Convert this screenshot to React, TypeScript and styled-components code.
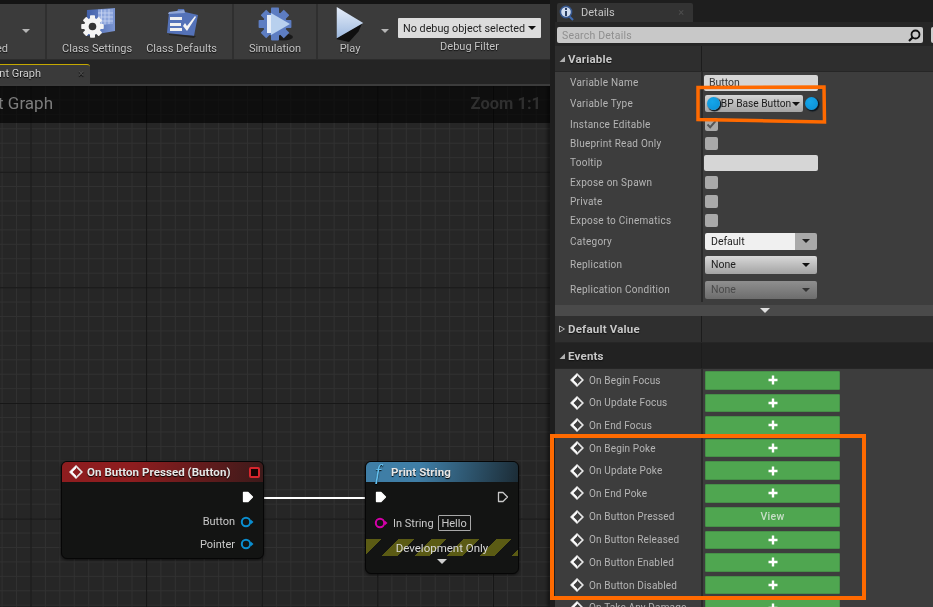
import styled, { createGlobalStyle } from "styled-components";

const Global = createGlobalStyle`
  html, body {
    margin: 0;
    padding: 0;
    width: 933px;
    height: 607px;
    overflow: hidden;
    background: #1a1a1a;
  }
  * { box-sizing: border-box; }
`;

const Screen = styled.div`
  position: relative;
  width: 933px;
  height: 607px;
  display: flex;
  overflow: hidden;
  background: #1c1c1c;
  font-family: Roboto, "Liberation Sans", sans-serif;
  filter: blur(0.35px);
`;

const LeftColumn = styled.div`
  width: 550px;
  height: 607px;
  display: flex;
  flex-direction: column;
  border-top: 4px solid #141414;
  background: #242424;
`;

const Toolbar = styled.div`
  height: 56px;
  flex: none;
  display: flex;
  background: #3b3b3b;
  border-bottom: 1px solid #2c2c2c;
`;

const ClippedGroup = styled.div`
  width: 47px;
  flex: none;
  display: flex;
  justify-content: space-between;
  overflow: hidden;
  border-right: 2px solid #2f2f2f;
`;

const ClippedLabelBox = styled.div`
  width: 8px;
  display: flex;
  justify-content: flex-end;
  white-space: nowrap;
  padding-top: 38px;
`;

const Caret = styled.span<{ $w?: number; $color?: string }>`
  width: 0;
  height: 0;
  flex: none;
  border-left: ${(p) => p.$w ?? 4}px solid transparent;
  border-right: ${(p) => p.$w ?? 4}px solid transparent;
  border-top: ${(p) => p.$w ?? 4}px solid ${(p) => p.$color ?? "#b5b5b5"};
`;

const ToolGroup = styled.div<{ $w: number; $line?: boolean }>`
  width: ${(p) => p.$w}px;
  flex: none;
  display: flex;
  justify-content: center;
  gap: 14px;
  border-right: ${(p) => (p.$line ? "2px solid #2f2f2f" : "none")};
`;

const ToolButton = styled.div`
  display: flex;
  flex-direction: column;
  align-items: center;
  justify-content: space-between;
  padding: 2px 0 4px;
  height: 55px;
`;

const ToolLabel = styled.span`
  font-size: 11px;
  line-height: 13px;
  color: #c4c4c4;
  white-space: nowrap;
  text-shadow: 0 1px 1px #111;
`;

const DebugBox = styled.div`
  flex: 1;
  display: flex;
  flex-direction: column;
  align-items: center;
  padding: 14px 9px 0 6px;
  gap: 2px;
`;

const DebugSelect = styled.div`
  width: 143px;
  height: 20px;
  flex: none;
  display: flex;
  align-items: center;
  justify-content: space-between;
  padding: 0 5px;
  background: #dcdcdc;
  border-radius: 1px;
  font-size: 10.8px;
  color: #222;
  white-space: nowrap;
`;

const CaretSlot = styled.div<{ $right?: number; $left?: number }>`
  width: 14px;
  flex: none;
  display: flex;
  justify-content: center;
  align-items: flex-start;
  padding-top: 25px;
  margin-left: ${(p) => p.$left ?? 0}px;
  margin-right: ${(p) => p.$right ?? 0}px;
`;

const TabStrip = styled.div`
  height: 24px;
  flex: none;
  display: flex;
  background: #242424;
`;

const GraphTab = styled.div`
  width: 90px;
  height: 20px;
  margin-top: 4px;
  padding: 0 6px 2px 0;
  display: flex;
  align-items: center;
  overflow: hidden;
  background: #3a3a3a;
  border-top: 1px solid #c4a800;
  border-top-right-radius: 3px;
  font-size: 11px;
  color: #d0d0d0;
  text-shadow: 0 1px 1px #000;
`;

const ClipEnd = styled.div<{ $w: number }>`
  width: ${(p) => p.$w}px;
  flex: none;
  display: flex;
  justify-content: flex-end;
  white-space: nowrap;
`;

const TabClose = styled.span`
  margin-left: auto;
  color: #4f4f4f;
  font-size: 11px;
`;

const Graph = styled.div`
  position: relative;
  flex: 1;
  overflow: hidden;
  border-top: 2px solid #3c3c3c;
  background-color: #262626;
  background-image:
    linear-gradient(to right, #141414 1px, transparent 1px),
    linear-gradient(to bottom, #141414 1px, transparent 1px),
    linear-gradient(to right, #313131 1px, transparent 1px),
    linear-gradient(to bottom, #313131 1px, transparent 1px);
  background-size: 115.6px 115.6px, 115.6px 115.6px, 14.45px 14.45px, 14.45px 14.45px;
  background-position: 30.5px 85.7px, 30.5px 85.7px, 1.6px 13.45px, 1.6px 13.45px;
  box-shadow: inset -3px 0 3px rgba(0, 0, 0, 0.4);
`;

const GraphTitle = styled.div`
  height: 37px;
  display: flex;
  align-items: center;
  justify-content: space-between;
  padding: 0 9px 3px 0;
  background: rgba(0, 0, 0, 0.62);
  font-size: 17px;
  color: #7d7d7d;
`;

const ZoomText = styled.span`
  font-size: 16.5px;
  font-weight: 700;
  color: #2f2f2f;
`;

const NodeCard = styled.div<{ $x: number; $y: number; $w: number; $h: number }>`
  position: absolute;
  left: ${(p) => p.$x}px;
  top: ${(p) => p.$y}px;
  width: ${(p) => p.$w}px;
  height: ${(p) => p.$h}px;
  background: #131413;
  border-radius: 6px;
  border: 1px solid #060606;
  box-shadow: 0 1px 3px rgba(0, 0, 0, 0.6);
  overflow: hidden;
  display: flex;
  flex-direction: column;
`;

const NodeHeader = styled.div<{ $from: string; $to: string }>`
  height: 20px;
  flex: none;
  display: flex;
  align-items: center;
  gap: 4px;
  padding: 0 3px 0 7px;
  background: linear-gradient(100deg, ${(p) => p.$from} 0%, ${(p) => p.$from} 35%, ${(p) => p.$to} 100%);
  font-size: 11.5px;
  font-weight: 700;
  letter-spacing: 0.06px;
  color: #e8e8e8;
  white-space: nowrap;
  text-shadow: 0 1px 1px #000;
`;

const DelegateMark = styled.span`
  margin-left: auto;
  width: 11px;
  height: 11px;
  flex: none;
  border: 2px solid #d8252d;
  border-radius: 2px;
  background: #170404;
`;

const PinRow = styled.div<{ $end?: boolean; $h: number }>`
  height: ${(p) => p.$h}px;
  flex: none;
  display: flex;
  align-items: center;
  gap: 5px;
  padding: ${(p) => (p.$end ? "0 9px 0 0" : "0 0 0 8px")};
  justify-content: ${(p) => (p.$end ? "flex-end" : "flex-start")};
  font-size: 11px;
  color: #c9c9c9;
`;

const SplitRow = styled(PinRow)`
  justify-content: space-between;
  padding: 0 9px;
`;

const HelloBox = styled.span`
  width: 33px;
  height: 16px;
  margin-left: -1px;
  display: inline-flex;
  align-items: center;
  justify-content: center;
  border: 1px solid #a8a8a8;
  border-radius: 1px;
  color: #c9c9c9;
`;

const Hazard = styled.div`
  height: 17px;
  margin-top: 5px;
  flex: none;
  display: flex;
  align-items: center;
  justify-content: center;
  font-size: 11.5px;
  color: #d8d8d8;
  background: repeating-linear-gradient(
    135deg,
    #5b5b14 0 11px,
    #131413 11px 23px
  );
`;

const NodeFoot = styled.div`
  flex: 1;
  display: flex;
  justify-content: center;
  padding-top: 3px;
`;

const Wire = styled.div`
  position: absolute;
  left: 252px;
  top: 411px;
  width: 124px;
  height: 2px;
  background: linear-gradient(to right, #555 0, #fff 12px, #fff 112px, #555 100%);
`;

const RightPanel = styled.div`
  flex: 1;
  min-width: 0;
  padding-left: 5px;
  display: flex;
  flex-direction: column;
  background: #1e1e1e;
`;

const DetailsTabRow = styled.div`
  height: 22px;
  flex: none;
  padding: 3px 0 0 2px;
`;

const DetailsTab = styled.div`
  width: 136px;
  height: 19px;
  display: flex;
  align-items: center;
  gap: 6px;
  padding: 0 9px 0 2px;
  background: #333;
  border-top-right-radius: 2px;
  border-top-left-radius: 2px;
  font-size: 11px;
  color: #c4c4c4;
`;

const DetailsBody = styled.div`
  flex: 1;
  min-height: 0;
  background: #3d3d3d;
  overflow: hidden;
`;

const SearchRow = styled.div`
  height: 24px;
  display: flex;
  gap: 8px;
  padding: 5px 0 3px 2px;
  background: #262626;
`;

const SearchField = styled.div`
  width: 366px;
  height: 16px;
  flex: none;
  display: flex;
  align-items: center;
  justify-content: space-between;
  padding: 0 2px 0 5px;
  background: #c8c8c8;
  border-radius: 2px;
  font-size: 10.5px;
  letter-spacing: 0.2px;
  color: #8f8f8f;
`;

const SearchSide = styled.div`
  width: 8px;
  flex: none;
  background: #cfcfcf;
  border-radius: 2px;
`;

const SectionHead = styled.div<{ $bg: string; $h: number }>`
  position: relative;
  height: ${(p) => p.$h}px;
  display: flex;
  align-items: center;
  gap: 2px;
  padding-left: 3px;
  background: ${(p) => p.$bg};
  border-bottom: 1px solid #262626;
  font-size: 11.5px;
  font-weight: 700;
  letter-spacing: 0.2px;
  color: #c8c8c8;
  text-shadow: 0 1px 1px #111;
  &::after {
    content: "";
    position: absolute;
    left: 146px;
    top: 0;
    bottom: 0;
    width: 1px;
    background: #1c1c1c;
  }
`;

const PropRow = styled.div<{ $h: number }>`
  height: ${(p) => p.$h}px;
  display: grid;
  grid-template-columns: 146px 1px 1fr;
  align-items: center;
`;

const PropLabel = styled.div`
  padding-left: 15px;
  font-size: 10px;
  letter-spacing: 0.25px;
  color: #b5b5b5;
  white-space: nowrap;
`;

const ColumnLine = styled.div`
  width: 2px;
  height: 100%;
  background: #2a2a2a;
`;

const PropValue = styled.div`
  padding-left: 2px;
  display: flex;
  align-items: center;
  min-width: 0;
`;

const TextInput = styled.div`
  width: 114px;
  height: 16px;
  padding-left: 5px;
  overflow: hidden;
  background: #d6d6d6;
  border-radius: 2px;
  font-size: 10.5px;
  line-height: 15px;
  color: #333;
`;

const CheckBox = styled.div`
  width: 13px;
  height: 13px;
  margin-left: 1px;
  display: flex;
  align-items: center;
  justify-content: center;
  background: #a9a9a9;
  border-radius: 2px;
`;

const TypeSelect = styled.div`
  width: 98px;
  height: 17px;
  margin-left: 1px;
  display: flex;
  align-items: center;
  justify-content: space-between;
  padding: 0 3px 0 2px;
  background: linear-gradient(#d4d4d4, #a5a5a5);
  border-radius: 2px;
  font-size: 10.2px;
  color: #1a1a1a;
  white-space: nowrap;
`;

const TypeDot = styled.span<{ $after?: boolean }>`
  width: 13px;
  height: 13px;
  flex: none;
  margin-left: ${(p) => (p.$after ? "2px" : "0")};
  border-radius: 50%;
  background: radial-gradient(circle at 40% 35%, #15a6ea, #0a8ed4);
  box-shadow: 1px 1px 1px 0.5px #0c1720;
`;

const SelectBox = styled.div<{ $look: "plain" | "bevel" | "off" }>`
  width: 112px;
  height: ${(p) => (p.$look === "plain" ? 17 : 18)}px;
  margin-left: 1px;
  display: flex;
  align-items: center;
  justify-content: space-between;
  padding: 0 7px 0 6px;
  border-radius: 2px;
  font-size: 10.5px;
  color: ${(p) => (p.$look === "off" ? "#4a4a4a" : "#222")};
  background: ${(p) =>
    p.$look === "plain"
      ? "linear-gradient(to right, #f0f0f0 0 80%, #a9a9a9 80% 100%)"
      : p.$look === "bevel"
      ? "linear-gradient(#d8d8d8, #a3a3a3)"
      : "linear-gradient(#8f8f8f, #6d6d6d)"};
`;

const ExpandStrip = styled.div`
  height: 11px;
  margin-top: 3px;
  display: flex;
  justify-content: center;
  align-items: center;
  padding-left: 41px;
  background: #4a4a4a;
`;

const EventLabel = styled.div`
  padding-left: 15px;
  display: flex;
  align-items: center;
  gap: 5px;
  font-size: 10px;
  letter-spacing: 0.15px;
  color: #b5b5b5;
  white-space: nowrap;
`;

const AddButton = styled.div`
  width: 135px;
  height: calc(100% - 4px);
  margin-left: 1px;
  display: flex;
  align-items: center;
  justify-content: center;
  background: #4fa650;
  border: 1px solid #469048;
  border-radius: 1px;
  font-size: 10.5px;
  font-weight: 500;
  letter-spacing: 0.3px;
  color: #c8dfc8;
`;

const EventValue = styled(PropValue)`
  height: 100%;
`;

const Annotations = styled.svg`
  position: absolute;
  left: 0;
  top: 0;
  pointer-events: none;
`;

const FunctionGlyph = styled.span`
  width: 11px;
  font-family: "Liberation Serif", serif;
  font-style: italic;
  font-size: 21px;
  line-height: 20px;
  font-weight: 400;
  color: #62c0f0;
  margin: 0 1px 0 2px;
`;

const EventIcon = ({ size = 14 }: { size?: number }) => (
  <svg width={size} height={size} viewBox="0 0 14 14" style={{ flex: "none" }}>
    <path d="M7 1.2 12.8 7 7 12.8 1.2 7Z" fill="none" stroke="#e6e6e6" strokeWidth="1.7" />
    <path d="M1.2 7 7 1.2 7 3.5 3.5 7 7 10.5 7 12.8Z" fill="#fff" />
  </svg>
);

const PlusIcon = () => (
  <svg width="10" height="10" viewBox="0 0 10 10">
    <path d="M5 0.5v9M0.5 5h9" stroke="#fff" strokeWidth="2.4" />
  </svg>
);

const ExecPin = ({ filled }: { filled: boolean }) => (
  <svg width="12" height="12" viewBox="0 0 12 12" style={{ flex: "none" }}>
    <path
      d="M1.5 1.5h4.5l4.5 4.5-4.5 4.5h-4.5Z"
      fill={filled ? "#fff" : "none"}
      stroke={filled ? "#fff" : "#c8c8c8"}
      strokeWidth="1.3"
      strokeLinejoin="round"
    />
  </svg>
);

const DataPin = ({ color }: { color: string }) => (
  <svg width="14" height="12" viewBox="0 0 14 12" style={{ flex: "none" }}>
    <circle cx="6" cy="6" r="4.2" fill="none" stroke={color} strokeWidth="2" />
    <path d="M11 3.8 13.5 6 11 8.2Z" fill={color} />
  </svg>
);

const teeth = [0, 45, 90, 135, 180, 225, 270, 315];

const Gear = ({ cx, cy, r, tooth, fill }: { cx: number; cy: number; r: number; tooth: number; fill: string }) => (
  <g fill={fill}>
    <circle cx={cx} cy={cy} r={r} />
    {teeth.map((a) => (
      <rect
        key={a}
        x={cx - tooth / 2}
        y={cy - r - tooth * 0.55}
        width={tooth}
        height={tooth}
        rx={0.8}
        transform={`rotate(${a} ${cx} ${cy})`}
      />
    ))}
  </g>
);

const ClassSettingsIcon = () => (
  <svg width="38" height="34" viewBox="0 0 38 34">
    <defs>
      <linearGradient id="pageFill" x1="0" y1="0" x2="1" y2="0">
        <stop offset="0" stopColor="#3f5ea8" />
        <stop offset="1" stopColor="#7c96d2" />
      </linearGradient>
    </defs>
    <path d="M9 4 37 2v23L8 30Z" fill="url(#pageFill)" />
    <path d="M20 3.5 35 3v15l-15 1Z" fill="#8ea6dc" />
    <path d="M23.5 3.5v15M27 3.5v15M31 3v15M20 7h15M20 11h15M20 15h15" stroke="#c9d6f2" strokeWidth="0.8" />
    <Gear cx={14.5} cy={20.5} r={8.5} tooth={5} fill="#f4f4f4" />
    <circle cx="14.5" cy="20.5" r="3.8" fill="#333" />
  </svg>
);

const ClassDefaultsIcon = () => (
  <svg width="36" height="34" viewBox="0 0 36 34">
    <path d="M3 27 5 6h8l1-3h6l1 3 13 3-4 21Z" fill="#5472b8" />
    <path d="M5 6 20 4l1 3-17 1Z" fill="#8fa5d6" />
    <path d="M6 11h12v3H6ZM6 17h11v3H6ZM6 22h12v3H6Z" fill="#f0f0f0" />
    <path d="m19 20 4 5 9-14-1-1-8 10-2-3Z" fill="#f4f4f4" />
    <path d="M5 29l25 3 2-2-27-2Z" fill="#1f1f1f" opacity="0.8" />
  </svg>
);

const SimulationIcon = () => (
  <svg width="38" height="36" viewBox="0 0 38 36">
    <ellipse cx="27" cy="31" rx="10" ry="3.5" fill="#141414" opacity="0.85" />
    <Gear cx={19} cy={18} r={12} tooth={8} fill="#5d7dc2" />
    <rect x="11" y="9" width="4" height="18" fill="#e6edf8" />
    <path d="M15 7 34 18 15 29Z" fill="#b8d0ee" />
  </svg>
);

const PlayIcon = () => (
  <svg width="30" height="37" viewBox="0 0 30 37" style={{ marginTop: 1 }}>
    <defs>
      <linearGradient id="playFill" x1="0" y1="0" x2="0" y2="1">
        <stop offset="0" stopColor="#e6eefa" />
        <stop offset="1" stopColor="#9db9df" />
      </linearGradient>
    </defs>
    <path d="M1 33 28 17 24 26 14 37 1 34Z" fill="#0f0f0f" />
    <path d="M1 0 29 17 1 33Z" fill="url(#playFill)" />
  </svg>
);

const DetailsIcon = () => (
  <svg width="16" height="16" viewBox="0 0 16 16" style={{ flex: "none" }}>
    <path d="M10 11l4 4" stroke="#3f6bb0" strokeWidth="2.2" />
    <circle cx="7" cy="7" r="5.6" fill="#cfdcf0" stroke="#36578f" strokeWidth="1.6" />
    <rect x="6" y="3" width="2" height="2" fill="#2b3f63" />
    <rect x="6" y="6" width="2" height="5" fill="#2b3f63" />
  </svg>
);

const SearchIcon = () => (
  <svg width="13" height="13" viewBox="0 0 13 13">
    <circle cx="7.5" cy="5.5" r="4" fill="none" stroke="#111" strokeWidth="1.8" />
    <path d="M4.5 8.5 1 12" stroke="#111" strokeWidth="2.2" />
  </svg>
);

const CheckMark = () => (
  <svg width="11" height="9" viewBox="0 0 11 9">
    <path d="M1.5 4.5 4.2 7.2 9.5 1.2" fill="none" stroke="#555" strokeWidth="2" />
  </svg>
);

const SectionArrow = ({ open }: { open: boolean }) => (
  <svg width="8" height="8" viewBox="0 0 8 8" style={{ flex: "none" }}>
    {open ? (
      <path d="M7 1.5V7H1.5Z" fill="#b0b0b0" />
    ) : (
      <path d="M1.5 1 6.5 4 1.5 7Z" fill="none" stroke="#b0b0b0" />
    )}
  </svg>
);

const events = [
  { name: "On Begin Focus", h: 22.6 },
  { name: "On Update Focus", h: 22.6 },
  { name: "On End Focus", h: 22.6 },
  { name: "On Begin Poke", h: 22.6 },
  { name: "On Update Poke", h: 22.6 },
  { name: "On End Poke", h: 22.6 },
  { name: "On Button Pressed", h: 24, view: true },
  { name: "On Button Released", h: 22.6 },
  { name: "On Button Enabled", h: 22.6 },
  { name: "On Button Disabled", h: 22.6 },
  { name: "On Take Any Damage", h: 22.6 },
];

function App() {
  return (
    <Screen>
      <Global />
      <LeftColumn>
        <Toolbar>
          <ClippedGroup>
            <ClippedLabelBox>
              <ToolLabel>Hide Unrelated</ToolLabel>
            </ClippedLabelBox>
            <CaretSlot $right={12}>
              <Caret />
            </CaretSlot>
          </ClippedGroup>
          <ToolGroup $w={187} $line>
            <ToolButton>
              <ClassSettingsIcon />
              <ToolLabel>Class Settings</ToolLabel>
            </ToolButton>
            <ToolButton>
              <ClassDefaultsIcon />
              <ToolLabel>Class Defaults</ToolLabel>
            </ToolButton>
          </ToolGroup>
          <ToolGroup $w={84} $line>
            <ToolButton>
              <SimulationIcon />
              <ToolLabel>Simulation</ToolLabel>
            </ToolButton>
          </ToolGroup>
          <ToolGroup $w={64}>
            <ToolButton>
              <PlayIcon />
              <ToolLabel>Play</ToolLabel>
            </ToolButton>
          </ToolGroup>
          <CaretSlot $left={-4}>
            <Caret />
          </CaretSlot>
          <DebugBox>
            <DebugSelect>
              No debug object selected
              <Caret $color="#111" />
            </DebugSelect>
            <ToolLabel>Debug Filter</ToolLabel>
          </DebugBox>
        </Toolbar>
        <TabStrip>
          <GraphTab>
            <ClipEnd $w={41}>Event Graph</ClipEnd>
            <TabClose>×</TabClose>
          </GraphTab>
        </TabStrip>
        <Graph>
          <GraphTitle>
            <ClipEnd $w={53}>Event Graph</ClipEnd>
            <ZoomText>Zoom 1:1</ZoomText>
          </GraphTitle>
          <Wire />
          <NodeCard $x={61} $y={375} $w={203} $h={98}>
            <NodeHeader $from="#8e1d1f" $to="#3c1a1a">
              <EventIcon />
              On Button Pressed (Button)
              <DelegateMark />
            </NodeHeader>
            <PinRow $end $h={29}>
              <ExecPin filled />
            </PinRow>
            <PinRow $end $h={21}>
              Button <DataPin color="#0a8ed0" />
            </PinRow>
            <PinRow $end $h={24}>
              Pointer <DataPin color="#0a8ed0" />
            </PinRow>
          </NodeCard>
          <NodeCard $x={365} $y={375} $w={154} $h={113}>
            <NodeHeader $from="#3f7ea6" $to="#1c2c36">
              <FunctionGlyph>f</FunctionGlyph>
              Print String
            </NodeHeader>
            <SplitRow $h={30}>
              <ExecPin filled />
              <ExecPin filled={false} />
            </SplitRow>
            <PinRow $h={22}>
              <DataPin color="#d400a8" />
              In String
              <HelloBox>Hello</HelloBox>
            </PinRow>
            <Hazard>Development Only</Hazard>
            <NodeFoot>
              <Caret $w={5} $color="#d0d0d0" />
            </NodeFoot>
          </NodeCard>
        </Graph>
      </LeftColumn>
      <RightPanel>
        <DetailsTabRow>
          <DetailsTab>
            <DetailsIcon />
            Details
            <TabClose>×</TabClose>
          </DetailsTab>
        </DetailsTabRow>
        <DetailsBody>
          <SearchRow>
            <SearchField>
              Search Details
              <SearchIcon />
            </SearchField>
            <SearchSide />
          </SearchRow>
          <SectionHead $bg="#2e2e2e" $h={26}>
            <SectionArrow open />
            Variable
          </SectionHead>
          <PropRow $h={21}>
            <PropLabel>Variable Name</PropLabel>
            <ColumnLine />
            <PropValue>
              <TextInput>Button</TextInput>
            </PropValue>
          </PropRow>
          <PropRow $h={21}>
            <PropLabel>Variable Type</PropLabel>
            <ColumnLine />
            <PropValue>
              <TypeSelect>
                <TypeDot />
                BP Base Button
                <Caret $color="#111" />
              </TypeSelect>
              <TypeDot $after />
            </PropValue>
          </PropRow>
          <PropRow $h={20}>
            <PropLabel>Instance Editable</PropLabel>
            <ColumnLine />
            <PropValue>
              <CheckBox>
                <CheckMark />
              </CheckBox>
            </PropValue>
          </PropRow>
          <PropRow $h={19}>
            <PropLabel>Blueprint Read Only</PropLabel>
            <ColumnLine />
            <PropValue>
              <CheckBox />
            </PropValue>
          </PropRow>
          <PropRow $h={19}>
            <PropLabel>Tooltip</PropLabel>
            <ColumnLine />
            <PropValue>
              <TextInput />
            </PropValue>
          </PropRow>
          <PropRow $h={20}>
            <PropLabel>Expose on Spawn</PropLabel>
            <ColumnLine />
            <PropValue>
              <CheckBox />
            </PropValue>
          </PropRow>
          <PropRow $h={19}>
            <PropLabel>Private</PropLabel>
            <ColumnLine />
            <PropValue>
              <CheckBox />
            </PropValue>
          </PropRow>
          <PropRow $h={19}>
            <PropLabel>Expose to Cinematics</PropLabel>
            <ColumnLine />
            <PropValue>
              <CheckBox />
            </PropValue>
          </PropRow>
          <PropRow $h={22}>
            <PropLabel>Category</PropLabel>
            <ColumnLine />
            <PropValue>
              <SelectBox $look="plain">
                Default
                <Caret $color="#222" />
              </SelectBox>
            </PropValue>
          </PropRow>
          <PropRow $h={25}>
            <PropLabel>Replication</PropLabel>
            <ColumnLine />
            <PropValue>
              <SelectBox $look="bevel">
                None
                <Caret $color="#111" />
              </SelectBox>
            </PropValue>
          </PropRow>
          <PropRow $h={25}>
            <PropLabel>Replication Condition</PropLabel>
            <ColumnLine />
            <PropValue>
              <SelectBox $look="off">
                None
                <Caret $color="#333" />
              </SelectBox>
            </PropValue>
          </PropRow>
          <ExpandStrip>
            <Caret $w={5} $color="#e0e0e0" />
          </ExpandStrip>
          <SectionHead $bg="#2f2f2f" $h={27}>
            <SectionArrow open={false} />
            Default Value
          </SectionHead>
          <SectionHead $bg="#222" $h={26}>
            <SectionArrow open />
            Events
          </SectionHead>
          {events.map((ev) => (
            <PropRow $h={ev.h} key={ev.name}>
              <EventLabel>
                <EventIcon />
                {ev.name}
              </EventLabel>
              <ColumnLine />
              <EventValue>
                <AddButton>{ev.view ? "View" : <PlusIcon />}</AddButton>
              </EventValue>
            </PropRow>
          ))}
        </DetailsBody>
      </RightPanel>
      <Annotations width="933" height="607" viewBox="0 0 933 607">
        <path d="M698 87.5 824 87 824.5 122 698 119.5Z" fill="none" stroke="#ff6a00" strokeWidth="3.5" />
        <rect x="552" y="436" width="312" height="162" fill="none" stroke="#ff6a00" strokeWidth="4" />
      </Annotations>
    </Screen>
  );
}

export default App;
